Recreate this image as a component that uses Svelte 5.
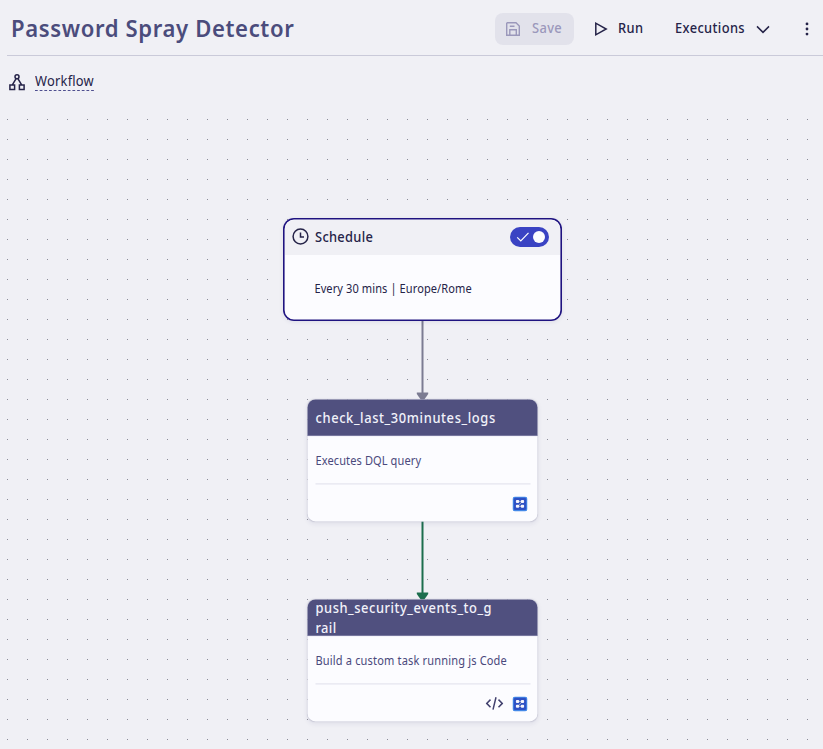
<script>
  const tasks = [
    { title: ['check_last_30minutes_logs'], text: 'Executes DQL query', top: 299, code: false, titleGap: [0.67], textGap: 0.11 },
    { title: ['push_security_events_to_g', 'rail'], text: 'Build a custom task running js Code', top: 499, code: true, titleGap: [0.6, 0.4], textGap: 0.17 }
  ];
</script>

<div class="app">
  <header>
    <h1>Password Spray Detector</h1>
    <div class="actions">
      <button class="save" disabled>
        <svg width="16" height="16" viewBox="0 0 16 16" fill="none" stroke="currentColor" stroke-width="1.4">
          <path d="M2.4 1.7H11L14.3 5V14.3H1.7V2.4ZM4.8 14V8.8H11.3V14M4.8 5.2H9.5" />
        </svg>
        <span>Save</span>
      </button>
      <button class="run">
        <svg width="14" height="16" viewBox="0 0 14 16" fill="none" stroke="currentColor" stroke-width="1.5">
          <path d="M1.8 2.2V13.8L12.2 8Z" />
        </svg>
        <span>Run</span>
      </button>
      <button class="exec">
        <span>Executions</span>
        <svg width="14" height="16" viewBox="0 0 14 16" fill="none" stroke="currentColor" stroke-width="1.5">
          <path d="M1 5.4L7 11.4L13 5.4" />
        </svg>
      </button>
      <button class="more" aria-label="More">
        <svg width="4" height="16" viewBox="0 0 4 16" fill="currentColor">
          <circle cx="2" cy="2.9" r="1.4" /><circle cx="2" cy="8" r="1.4" /><circle cx="2" cy="13.1" r="1.4" />
        </svg>
      </button>
    </div>
  </header>

  <nav>
    <svg width="16" height="17" viewBox="0 0 16 17" fill="none" stroke="currentColor" stroke-width="1.5">
      <circle cx="8" cy="2.8" r="2" />
      <path d="M7.1 4.7L3.5 10.7M8.9 4.7L12.5 10.7M.9 10.9H5.6V15.6H.9ZM10.4 10.9H15.1V15.6H10.4Z" />
    </svg>
    <span>Workflow</span>
  </nav>

  <main>
    <svg class="field" width="823" height="649">
      <defs>
        <pattern id="dots" x="7" y="19" width="20" height="20" patternUnits="userSpaceOnUse">
          <rect width="1" height="1" fill="#8b8b98" />
        </pattern>
      </defs>
      <rect x="7" width="816" height="649" fill="url(#dots)" />
      <path d="M422.5 221V294" stroke="#7c7c92" stroke-width="2" />
      <path d="M416.8 292.5H428.2V294L424 300H421L416.8 294Z" fill="#7c7c92" />
      <path d="M422.5 421V494" stroke="#1c6e4d" stroke-width="2" />
      <path d="M416.8 492.5H428.2V494L424 500H421L416.8 494Z" fill="#1c6e4d" />
    </svg>

    <section class="schedule">
      <div class="top">
        <svg width="17" height="17" viewBox="0 0 17 17" fill="none" stroke="currentColor" stroke-width="1.5">
          <circle cx="8.5" cy="8.5" r="7.4" /><path d="M8.5 4.5V9H12" />
        </svg>
        <strong>Schedule</strong>
        <div class="toggle">
          <svg width="14" height="12" viewBox="0 0 14 12" fill="none" stroke="#fff" stroke-width="1.2"><path d="M1.2 6.3L4.8 10L12.5 1.8" /></svg>
          <i></i>
        </div>
      </div>
      <p>Every 30 mins | Europe/Rome</p>
    </section>

    {#each tasks as task}
      <article style:top="{task.top}px">
        <div class="name">
          {#each task.title as line, i}
            <span style:letter-spacing="{task.titleGap[i]}px">{line}</span>
          {/each}
        </div>
        <p style:letter-spacing="{task.textGap}px">{task.text}</p>
        <footer>
          {#if task.code}
            <svg width="18" height="14" viewBox="0 0 18 14" fill="none" stroke="#43426f" stroke-width="1.5">
              <path d="M5 3.2L1.2 7L5 10.8M13 3.2L16.8 7L13 10.8M10.5 .8L7.5 13.2" />
            </svg>
          {/if}
          <svg width="15" height="15" viewBox="0 0 15 15">
            <rect width="15" height="15" rx="3" fill="#4388e8" />
            <rect x="1.3" y="1.3" width="12.4" height="12.4" rx="1.5" fill="#2e50c4" />
            <path d="M5.5 5H10M5.5 10H10M10 5L5 10" stroke="#a3a6bd" stroke-width="1" />
            <g fill="#f5f4fc">
              <rect x="3.4" y="3.6" width="3.3" height="3" rx="1" /><rect x="8.3" y="3.6" width="3.3" height="3" rx="1" />
              <rect x="3.4" y="8.4" width="3.3" height="3" rx="1" /><rect x="8.3" y="8.4" width="3.3" height="3" rx="1" />
            </g>
          </svg>
        </footer>
      </article>
    {/each}
  </main>
</div>

<style>
  :global(body) { background: #f0f0f5; }
  .app {
    width: 823px; height: 749px; overflow: hidden; background: #f0f0f5; color: #252348;
    font-family: "Noto Sans", "Open Sans", sans-serif;
  }
  h1, button span, nav span, strong, p, .name span { transform: scaleX(.92); transform-origin: 0 50%; }
  header {
    height: 55px; box-sizing: content-box; margin-left: 7px; border-bottom: 1px solid #cacad9;
    display: flex; justify-content: space-between; align-items: flex-start;
  }
  h1 { margin: 11px 0 0 4px; font-size: 24px; line-height: 34px; font-weight: 600; letter-spacing: .68px; color: #4b4c7c; white-space: nowrap; }
  .actions { display: flex; padding-top: 13px; height: 32px; }
  button { border: 0; background: none; padding: 0; height: 32px; display: flex; align-items: center; color: inherit; font: 500 14px/20px "Noto Sans", "Open Sans", sans-serif; letter-spacing: .4px; white-space: nowrap; }
  button span { margin-top: -2px; }
  .save { width: 79px; box-sizing: border-box; padding-left: 10px; gap: 10.5px; border-radius: 8px; background: #e2e2eb; color: #9b98bb; }
  .run { margin-left: 20px; width: 81px; gap: 10px; }
  .exec { width: 130px; gap: 5px; }
  .more { width: 18px; }
  nav { height: 44px; display: flex; align-items: flex-start; padding-left: 9px; }
  nav svg { margin-top: 18px; }
  nav span { margin: 15px 0 0 10px; height: 19px; border-bottom: 1px dashed #46468a; font-size: 14px; line-height: 19px; letter-spacing: .25px; }
  main { position: relative; height: 649px; }
  .field { display: block; }
  p { margin: 0; white-space: nowrap; }
  .schedule {
    position: absolute; left: 283px; top: 118px; width: 279px; height: 103px; box-sizing: border-box;
    border-radius: 11px; background: #fcfcff; box-shadow: inset 0 0 0 1.6px #1f1380, 0 1px 4px #28286018; padding: 2px;
  }
  .top { height: 35px; box-sizing: border-box; background: #f0f0f5; border-radius: 9px 9px 0 0; display: flex; align-items: center; padding: 0 11.5px 1px 7px; }
  .top > svg { margin-top: -1px; }
  strong { margin: -1.5px 0 0 5.5px; font-size: 14px; font-weight: 500; letter-spacing: .32px; }
  .toggle { margin-left: auto; width: 38.5px; height: 20px; border-radius: 10px; background: #3a43c3; display: flex; align-items: center; justify-content: space-between; box-sizing: border-box; padding: 0 4px 0 6px; }
  .toggle i { width: 12px; height: 12px; border-radius: 50%; background: #fcfcff; }
  .schedule p { padding: 25px 0 0 32px; font-size: 12px; line-height: 18px; letter-spacing: .1px; }
  article {
    position: absolute; left: 307px; width: 230px; height: 122px; border-radius: 8px; transform: translate(.5px, .4px);
    background: #fcfcff; box-shadow: 0 0 1px #aaaabe80, 0 2px 5px #28286014;
  }
  .name { height: 37px; background: #50507f; border-bottom: 1px solid #d4d3e7; border-radius: 8px 8px 0 0; box-sizing: border-box; padding: 1px 0 0 8px; display: flex; flex-direction: column; justify-content: center; color: #f2f2fa; font-size: 14px; line-height: 20px; font-weight: 500; white-space: nowrap; }
  .name span { position: relative; top: .5px; }
  article p { height: 47px; box-sizing: border-box; padding: 16px 0 0 8.7px; font-size: 12px; line-height: 18px; color: #4a497c; }
  footer { margin: 0 7.5px; border-top: 1.5px solid #dfdfeb; height: 37px; display: flex; align-items: center; justify-content: flex-end; gap: 9px; padding: 2px 3px 0 0; box-sizing: border-box; }
</style>
